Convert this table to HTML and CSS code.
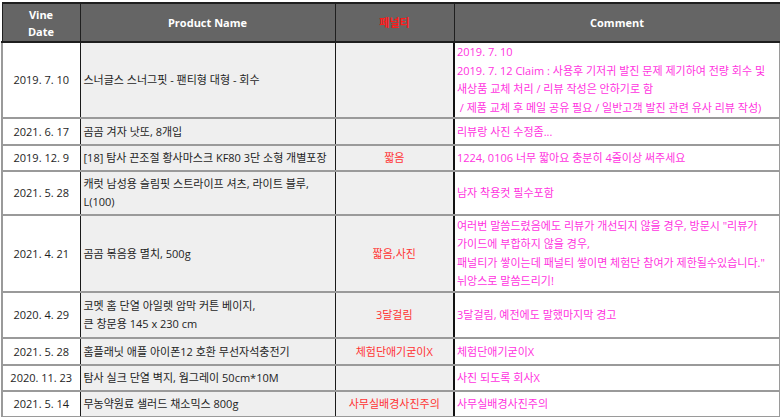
FILE: index.html
```html
<!DOCTYPE html>
<html lang="ko">
<head>
<meta charset="utf-8">
<link rel="stylesheet" href="styles.css">
</head>
<body>
<table class="sheet">
  <colgroup>
    <col class="c-date">
    <col class="c-name">
    <col class="c-pen">
    <col class="c-com">
  </colgroup>
  <thead>
    <tr class="h-row">
      <th>Vine<br>Date</th>
      <th>Product Name</th>
      <th class="pen-h">페널티</th>
      <th>Comment</th>
    </tr>
  </thead>
  <tbody>
    <tr class="r1">
      <td class="date">2019. 7. 10</td>
      <td class="name">스너글스 스너그핏 - 팬티형 대형 - 회수</td>
      <td class="pen"></td>
      <td class="com">2019. 7. 10<br>2019. 7. 12 Claim : 사용후 기저귀 발진 문제 제기하여 전량 회수 및<br>새상품 교체 처리 / 리뷰 작성은 안하기로 함<br>&nbsp;/ 제품 교체 후 메일 공유 필요 / 일반고객 발진 관련 유사 리뷰 작성)</td>
    </tr>
    <tr class="r2">
      <td class="date">2021. 6. 17</td>
      <td class="name">곰곰 겨자 낫또, 8개입</td>
      <td class="pen"></td>
      <td class="com">리뷰랑 사진 수정좀...</td>
    </tr>
    <tr class="r3">
      <td class="date">2019. 12. 9</td>
      <td class="name">[18] 탐사 끈조절 황사마스크 KF80 3단 소형 개별포장</td>
      <td class="pen">짧음</td>
      <td class="com">1224, 0106 너무 짧아요 충분히 4줄이상 써주세요</td>
    </tr>
    <tr class="r4">
      <td class="date">2021. 5. 28</td>
      <td class="name">캐럿 남성용 슬림핏 스트라이프 셔츠, 라이트 블루,<br>L(100)</td>
      <td class="pen"></td>
      <td class="com">남자 착용컷 필수포함</td>
    </tr>
    <tr class="r5">
      <td class="date">2021. 4. 21</td>
      <td class="name">곰곰 볶음용 멸치, 500g</td>
      <td class="pen">짧음,사진</td>
      <td class="com">여러번 말씀드렸음에도 리뷰가 개선되지 않을 경우, 방문시 "리뷰가<br>가이드에 부합하지 않을 경우,<br>패널티가 쌓이는데 패널티 쌓이면 체험단 참여가 제한될수있습니다."<br>뉘앙스로 말씀드리기!</td>
    </tr>
    <tr class="r6">
      <td class="date">2020. 4. 29</td>
      <td class="name">코멧 홈 단열 아일렛 암막 커튼 베이지,<br>큰 창문용 145 x 230 cm</td>
      <td class="pen">3달걸림</td>
      <td class="com">3달걸림, 예전에도 말했마지막 경고</td>
    </tr>
    <tr class="r7">
      <td class="date">2021. 5. 28</td>
      <td class="name">홈플래닛 애플 아이폰12 호환 무선자석충전기</td>
      <td class="pen">체험단애기굳이X</td>
      <td class="com">체험단애기굳이X</td>
    </tr>
    <tr class="r8">
      <td class="date">2020. 11. 23</td>
      <td class="name">탐사 실크 단열 벽지, 웜그레이 50cm*10M</td>
      <td class="pen"></td>
      <td class="com">사진 되도록 회사X</td>
    </tr>
    <tr class="r9">
      <td class="date">2021. 5. 14</td>
      <td class="name">무농약원료 샐러드 채소믹스 800g</td>
      <td class="pen">사무실배경사진주의</td>
      <td class="com">사무실배경사진주의</td>
    </tr>
  </tbody>
</table>
</body>
</html>
```

FILE: styles.css
```css
html, body {
  margin: 0;
  padding: 0;
  background: #ffffff;
}

body {
  padding: 2px 0 0 1px;
  font-family: "Open Sans", "Noto Sans CJK KR", sans-serif;
  font-size: 11px;
  color: #1e1e1e;
}

.sheet {
  border-collapse: collapse;
  table-layout: fixed;
  width: 778px;
}

.c-date { width: 78px; }
.c-name { width: 255px; }
.c-pen { width: 119px; }
.c-com { width: 326px; }

.sheet th {
  background: #656565;
  color: #ffffff;
  font-weight: 700;
  font-size: 11px;
  line-height: 17px;
  height: 37px;
  padding: 0;
  border: 1px solid #1f1f1f;
  border-top-width: 2px;
  border-bottom-width: 2px;
  text-align: center;
  vertical-align: middle;
}

.sheet th.pen-h {
  color: #ff1a1a;
}

.sheet td {
  padding: 0 2px;
  line-height: 18.6px;
  vertical-align: middle;
  white-space: nowrap;
  overflow: hidden;
  border-top: 2px solid #9a9a9a;
  border-bottom: 2px solid #9a9a9a;
}

.sheet td.date {
  text-align: center;
  background: #ffffff;
  border-left: 2px solid #9a9a9a;
  border-right: 1px solid #1a1a1a;
}

.sheet td.name {
  background: #efefef;
  padding-left: 3px;
  border-right: 1px solid #1a1a1a;
}

.sheet td.pen {
  background: #efefef;
  text-align: center;
  color: #ff3333;
  border-right: 2px solid #111111;
}

.sheet td.com {
  background: #ffffff;
  color: #ff33e0;
  border-right: 2px solid #9a9a9a;
}

.r1 td { height: 74px; }
.r2 td { height: 25px; }
.r3 td { height: 24px; }
.r4 td { height: 42px; }
.r5 td { height: 75px; }
.r6 td { height: 44px; }
.r7 td { height: 25px; }
.r8 td { height: 24px; }
.r9 td { height: 24px; }
```
